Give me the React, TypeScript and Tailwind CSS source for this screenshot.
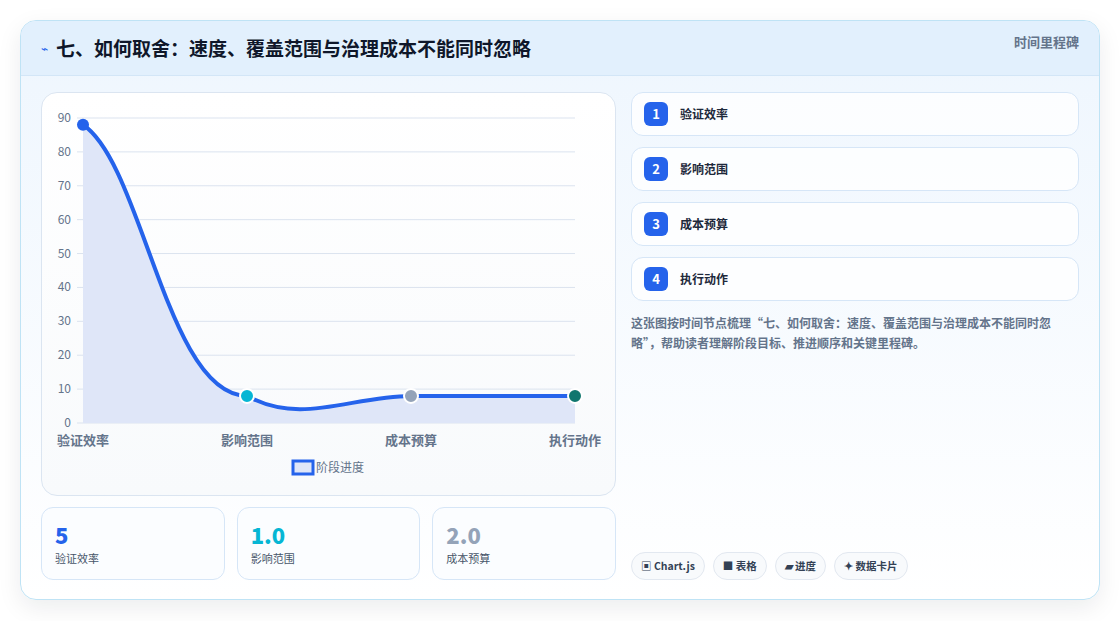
const F = { fontFamily: '"Noto Sans CJK SC", "Liberation Sans", sans-serif' };

const steps = ["验证效率", "影响范围", "成本预算", "执行动作"];
const yTicks = [90, 80, 70, 60, 50, 40, 30, 20, 10, 0];
const X0 = 41, X1 = 533, YT = 25, YB = 330;
const yOf = (v: number) => YB - ((YB - YT) * v) / 90;
const xs = [X0, X0 + 164, X0 + 328, X1];

function Chart() {
  const p = [
    [xs[0], yOf(88)],
    [xs[1], yOf(8)],
    [xs[2], yOf(8)],
    [xs[3], yOf(8)],
  ];
  const line = `M${p[0][0]},${p[0][1]} C${p[0][0] + 60},${p[0][1] + 40} ${p[1][0] - 80},${p[1][1]} ${p[1][0]},${p[1][1]} C${p[1][0] + 55},${p[1][1] + 30} ${p[2][0] - 60},${p[2][1]} ${p[2][0]},${p[2][1]} L${p[3][0]},${p[3][1]}`;
  const dots = ["#2563eb", "#06b6d4", "#94a3b8", "#0f766e"];
  return (
    <svg width="574" height="400" className="block" style={F}>
      {yTicks.map((t) => (
        <g key={t}>
          <line x1={X0 - 6} x2={X1} y1={yOf(t)} y2={yOf(t)} stroke="#dbe3ef" />
          <text x={X0 - 12} y={yOf(t) + 4} textAnchor="end" fontSize="12" fill="#64748b">{t}</text>
        </g>
      ))}
      <path d={`${line} L${X1},${YB} L${X0},${YB} Z`} fill="#dfe6f8" />
      <path d={line} fill="none" stroke="#2563eb" strokeWidth="4" />
      {p.map((q, i) => (
        <circle key={i} cx={q[0]} cy={q[1]} r={i === 0 ? 6 : 7} fill={dots[i]} stroke={i === 0 ? "none" : "#fff"} strokeWidth="2" />
      ))}
      {steps.map((s, i) => (
        <text key={s} x={xs[i]} y={352} textAnchor="middle" fontSize="13" fontWeight="600" fill="#64748b">{s}</text>
      ))}
      <rect x="251" y="368" width="20" height="13" fill="#dfe6f8" stroke="#2563eb" strokeWidth="3" />
      <text x="274" y="379" fontSize="12" fill="#64748b">阶段进度</text>
    </svg>
  );
}

export default function App() {
  return (
    <div className="w-[1120px] h-[621px] bg-white pt-5 px-5" style={F}>
      <div className="h-[580px] rounded-2xl border border-[#bfe3f5] bg-gradient-to-b from-[#eef6fe] to-white shadow-[0_8px_24px_rgba(15,23,42,0.08)] overflow-hidden flex flex-col">
        <div className="h-[55px] shrink-0 flex items-center justify-between px-5 bg-[#e2f0fd] border-b border-[#d3e6f7]">
          <div className="flex items-center gap-2">
            <span className="text-[#2563eb] text-xs">⌁</span>
            <h1 className="text-[19px] font-bold text-[#0f172a]">七、如何取舍：速度、覆盖范围与治理成本不能同时忽略</h1>
          </div>
          <span className="text-[13px] font-semibold text-[#64748b] -mt-3">时间里程碑</span>
        </div>
        <div className="flex-1 flex gap-[15px] px-5 pt-4 pb-5">
          <div className="w-[575px] flex flex-col gap-[11px]">
            <div className="h-[404px] rounded-2xl border border-[#dbe5f1] bg-gradient-to-b from-white to-[#f8fafc]">
              <Chart />
            </div>
            <div className="grid grid-cols-3 gap-3">
              {[
                ["5", "验证效率", "text-[#2563eb]"],
                ["1.0", "影响范围", "text-[#06b6d4]"],
                ["2.0", "成本预算", "text-[#94a3b8]"],
              ].map(([v, l, c]) => (
                <div key={l} className="h-[73px] rounded-xl border border-[#d6e6f7] bg-[#fbfdff] px-[13px] pt-[12px]">
                  <div className={`text-[22px] leading-7 font-extrabold ${c}`}>{v}</div>
                  <div className="text-[11px] text-[#475569] mt-[2px]">{l}</div>
                </div>
              ))}
            </div>
          </div>
          <div className="flex-1 flex flex-col">
            <div className="flex flex-col gap-[11px]">
              {steps.map((s, i) => (
                <div key={s} className="h-[44px] rounded-xl border border-[#d6e6f7] bg-white/80 flex items-center gap-3 px-3">
                  <span className="w-6 h-6 rounded-md bg-[#2563eb] text-white text-[13px] font-bold flex items-center justify-center">{i + 1}</span>
                  <span className="text-[12px] font-semibold text-[#1e293b]">{s}</span>
                </div>
              ))}
            </div>
            <p className="mt-[12px] text-[12px] leading-[20px] font-semibold text-[#64748b]">
              这张图按时间节点梳理“七、如何取舍：速度、覆盖范围与治理成本不能同时忽略”，帮助读者理解阶段目标、推进顺序和关键里程碑。
            </p>
            <div className="mt-auto flex gap-2">
              {["▣ Chart.js", "■ 表格", "▰ 进度", "✦ 数据卡片"].map((c) => (
                <span key={c} className="h-[28px] px-[9px] rounded-full border border-[#e2e8f0] bg-[#f8fafc] text-[10.5px] font-semibold text-[#334155] flex items-center">{c}</span>
              ))}
            </div>
          </div>
        </div>
      </div>
    </div>
  );
}
